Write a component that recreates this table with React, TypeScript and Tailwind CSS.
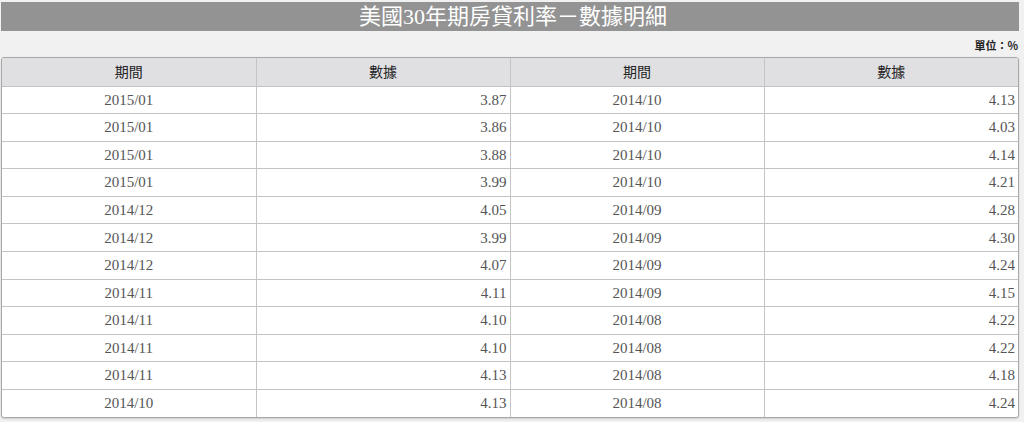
const ROWS: [string, string, string, string][] = [
  ["2015/01", "3.87", "2014/10", "4.13"],
  ["2015/01", "3.86", "2014/10", "4.03"],
  ["2015/01", "3.88", "2014/10", "4.14"],
  ["2015/01", "3.99", "2014/10", "4.21"],
  ["2014/12", "4.05", "2014/09", "4.28"],
  ["2014/12", "3.99", "2014/09", "4.30"],
  ["2014/12", "4.07", "2014/09", "4.24"],
  ["2014/11", "4.11", "2014/09", "4.15"],
  ["2014/11", "4.10", "2014/08", "4.22"],
  ["2014/11", "4.10", "2014/08", "4.22"],
  ["2014/11", "4.13", "2014/08", "4.18"],
  ["2014/10", "4.13", "2014/08", "4.24"],
];

const CJK = "font-['Noto_Sans_CJK_TC','Noto_Sans',sans-serif]";

export default function App() {
  return (
    <div className="h-[422px] w-[1024px] overflow-hidden bg-[#f1f1f1] pt-[2px] pl-[1px]">
      <div className="w-[1018px]">
        <div className="flex h-[29px] items-center justify-center bg-[#939393] pl-[6px] font-['Liberation_Serif','Noto_Sans_CJK_TC',serif] text-[22px] leading-none text-white">
          美國30年期房貸利率－數據明細
        </div>

        <div className={`flex h-[26px] items-center justify-end pr-[1px] pt-[2px] text-[11px] font-bold text-[#222] ${CJK}`}>
          單位：%
        </div>

        <div className="overflow-hidden rounded-[3px] border border-[#a8a8a8] bg-white shadow-[0_1px_2px_rgba(0,0,0,0.15)]">
          <table className="w-full table-fixed border-collapse">
            <thead>
              <tr className="h-[28px] bg-[#e0e0e2]">
                {["期間", "數據", "期間", "數據"].map((h, i) => (
                  <th
                    key={i}
                    className={`border-b border-[#c4c4c4] ${i > 0 ? "border-l" : ""} text-center text-[14px] font-normal text-[#222] ${CJK}`}
                  >
                    {h}
                  </th>
                ))}
              </tr>
            </thead>
            <tbody className="font-['Liberation_Serif',serif] text-[15px] text-[#555]">
              {ROWS.map((r, ri) => (
                <tr key={ri} className="h-[27.6px]">
                  {r.map((c, ci) => (
                    <td
                      key={ci}
                      className={`${ri < ROWS.length - 1 ? "border-b" : ""} ${ci > 0 ? "border-l" : ""} border-[#c4c4c4] p-0 ${ci % 2 === 0 ? "text-center" : "pr-[3px] text-right"}`}
                    >
                      {c}
                    </td>
                  ))}
                </tr>
              ))}
            </tbody>
          </table>
        </div>
      </div>
    </div>
  );
}
